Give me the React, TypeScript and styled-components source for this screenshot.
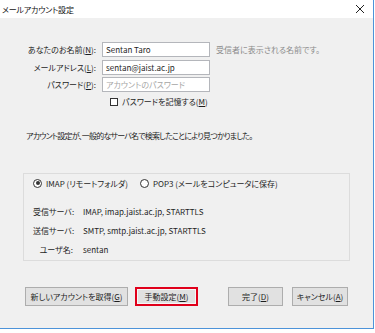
import React from 'react';
import styled, {createGlobalStyle} from 'styled-components';

const GlobalStyle = createGlobalStyle`
  html, body {
    margin: 0;
    padding: 0;
    background: #ffffff;
  }

  body {
    font-family: "Noto Sans CJK JP", "Noto Sans", sans-serif;
    font-size: 8px;
    color: #1e1e1e;
    font-feature-settings: "palt";
  }
`;

const Page = styled.div`
  width: 375px;
  height: 333px;
  overflow: hidden;
  background: #ffffff;
`;

const Window = styled.div`
  display: flex;
  flex-direction: column;
  width: 373px;
  height: 328px;
  background: #f0f0f0;
  border-right: 1px solid #4d93d9;
  border-bottom: 1px solid #4d93d9;
`;

const TitleBar = styled.div`
  display: flex;
  align-items: center;
  justify-content: space-between;
  height: 18px;
  padding: 0 8px 0 2px;
  background: #ffffff;
  font-size: 8px;
  letter-spacing: -0.2px;
  color: #111111;
`;

const Body = styled.div`
  display: flex;
  flex-direction: column;
  padding: 24px 0 0 0;
`;

const FormGrid = styled.div`
  display: grid;
  grid-template-columns: 96px 108px auto;
  column-gap: 6px;
  row-gap: 2.5px;
  align-items: center;
`;

const Label = styled.label`
  text-align: right;
  white-space: nowrap;
`;

const Input = styled.div<{placeholder?: boolean}>`
  box-sizing: border-box;
  height: 15px;
  line-height: 13px;
  padding: 0 3px;
  background: #ffffff;
  border: 1px solid #b4b6bb;
  color: ${({placeholder}) => placeholder ? `#a6a6a6` : `#1e1e1e`};
  white-space: nowrap;
`;

const Hint = styled.span`
  color: #8c8c8c;
  white-space: nowrap;
`;

const CheckRow = styled.div`
  display: flex;
  align-items: center;
  gap: 4px;
  margin: 4px 0 0 110px;
`;

const CheckBox = styled.span`
  box-sizing: border-box;
  width: 8px;
  height: 8px;
  background: #ffffff;
  border: 1px solid #333333;
`;

const Message = styled.p`
  margin: 23px 0 0 26px;
  letter-spacing: -0.8px;
  white-space: nowrap;
`;

const GroupBox = styled.div`
  display: flex;
  flex-direction: column;
  box-sizing: border-box;
  width: 327px;
  height: 88px;
  margin: 32px 0 0 23px;
  padding: 3px 0 0 9px;
  border: 1px solid #dcdcdc;
`;

const RadioRow = styled.div`
  display: flex;
  align-items: center;
  height: 12px;
`;

const RadioItem = styled.span`
  display: flex;
  align-items: center;
  gap: 4px;
  margin-right: 12px;
  white-space: nowrap;
`;

const Radio = styled.span<{checked?: boolean}>`
  box-sizing: border-box;
  position: relative;
  width: 9px;
  height: 9px;
  border-radius: 50%;
  border: 1px solid #333333;
  background: #ffffff;

  &::after {
    content: "";
    display: ${({checked}) => checked ? `block` : `none`};
    position: absolute;
    left: 1.5px;
    top: 1.5px;
    width: 4px;
    height: 4px;
    border-radius: 50%;
    background: #333333;
  }
`;

const InfoGrid = styled.div`
  display: grid;
  grid-template-columns: 40px auto;
  column-gap: 10px;
  row-gap: 7px;
  margin-top: 17px;
  line-height: 12px;
`;

const InfoLabel = styled.span`
  text-align: right;
  white-space: nowrap;
`;

const ButtonBar = styled.div`
  display: flex;
  align-items: center;
  margin: 26px 0 0 25px;
`;

const Button = styled.div<{width: number; gap?: number}>`
  box-sizing: border-box;
  display: flex;
  align-items: center;
  justify-content: center;
  width: ${({width}) => width}px;
  height: 19px;
  margin-left: ${({gap}) => gap || 0}px;
  background: #e1e1e1;
  border: 1px solid #adadad;
  white-space: nowrap;
`;

const Highlighted = styled(Button)`
  border: 2px solid #e0001b;
  box-shadow: inset 0 0 0 1px #f6f6f6;
`;

const Key = styled.span`
  text-decoration: underline;
`;

const App: React.FunctionComponent = () => {
  return (
    <Page>
      <GlobalStyle />
      <Window>
        <TitleBar>
          <span>メールアカウント設定</span>
          <svg width="10" height="10" viewBox="0 0 10 10">
            <path d="M1 1L9 9M9 1L1 9" stroke="#222222" strokeWidth="1" />
          </svg>
        </TitleBar>
        <Body>
          <FormGrid>
            <Label>あなたのお名前(<Key>N</Key>):</Label>
            <Input>Sentan Taro</Input>
            <Hint>受信者に表示される名前です。</Hint>
            <Label>メールアドレス(<Key>L</Key>):</Label>
            <Input>sentan@jaist.ac.jp</Input>
            <span />
            <Label>パスワード(<Key>P</Key>):</Label>
            <Input placeholder>アカウントのパスワード</Input>
            <span />
          </FormGrid>
          <CheckRow>
            <CheckBox />
            <span>パスワードを記憶する(<Key>M</Key>)</span>
          </CheckRow>
          <Message>アカウント設定が、一般的なサーバ名で検索したことにより見つかりました。</Message>
          <GroupBox>
            <RadioRow>
              <RadioItem><Radio checked />IMAP (リモートフォルダ)</RadioItem>
              <RadioItem><Radio />POP3 (メールをコンピュータに保存)</RadioItem>
            </RadioRow>
            <InfoGrid>
              <InfoLabel>受信サーバ:</InfoLabel>
              <span>IMAP, imap.jaist.ac.jp, STARTTLS</span>
              <InfoLabel>送信サーバ:</InfoLabel>
              <span>SMTP, smtp.jaist.ac.jp, STARTTLS</span>
              <InfoLabel>ユーザ名:</InfoLabel>
              <span>sentan</span>
            </InfoGrid>
          </GroupBox>
          <ButtonBar>
            <Button width={103}>新しいアカウントを取得(<Key>G</Key>)</Button>
            <Highlighted width={63} gap={7}>手動設定(<Key>M</Key>)</Highlighted>
            <Button width={55} gap={30}>完了(<Key>D</Key>)</Button>
            <Button width={56} gap={9}>キャンセル(<Key>A</Key>)</Button>
          </ButtonBar>
        </Body>
      </Window>
    </Page>
  );
};

export default App;
